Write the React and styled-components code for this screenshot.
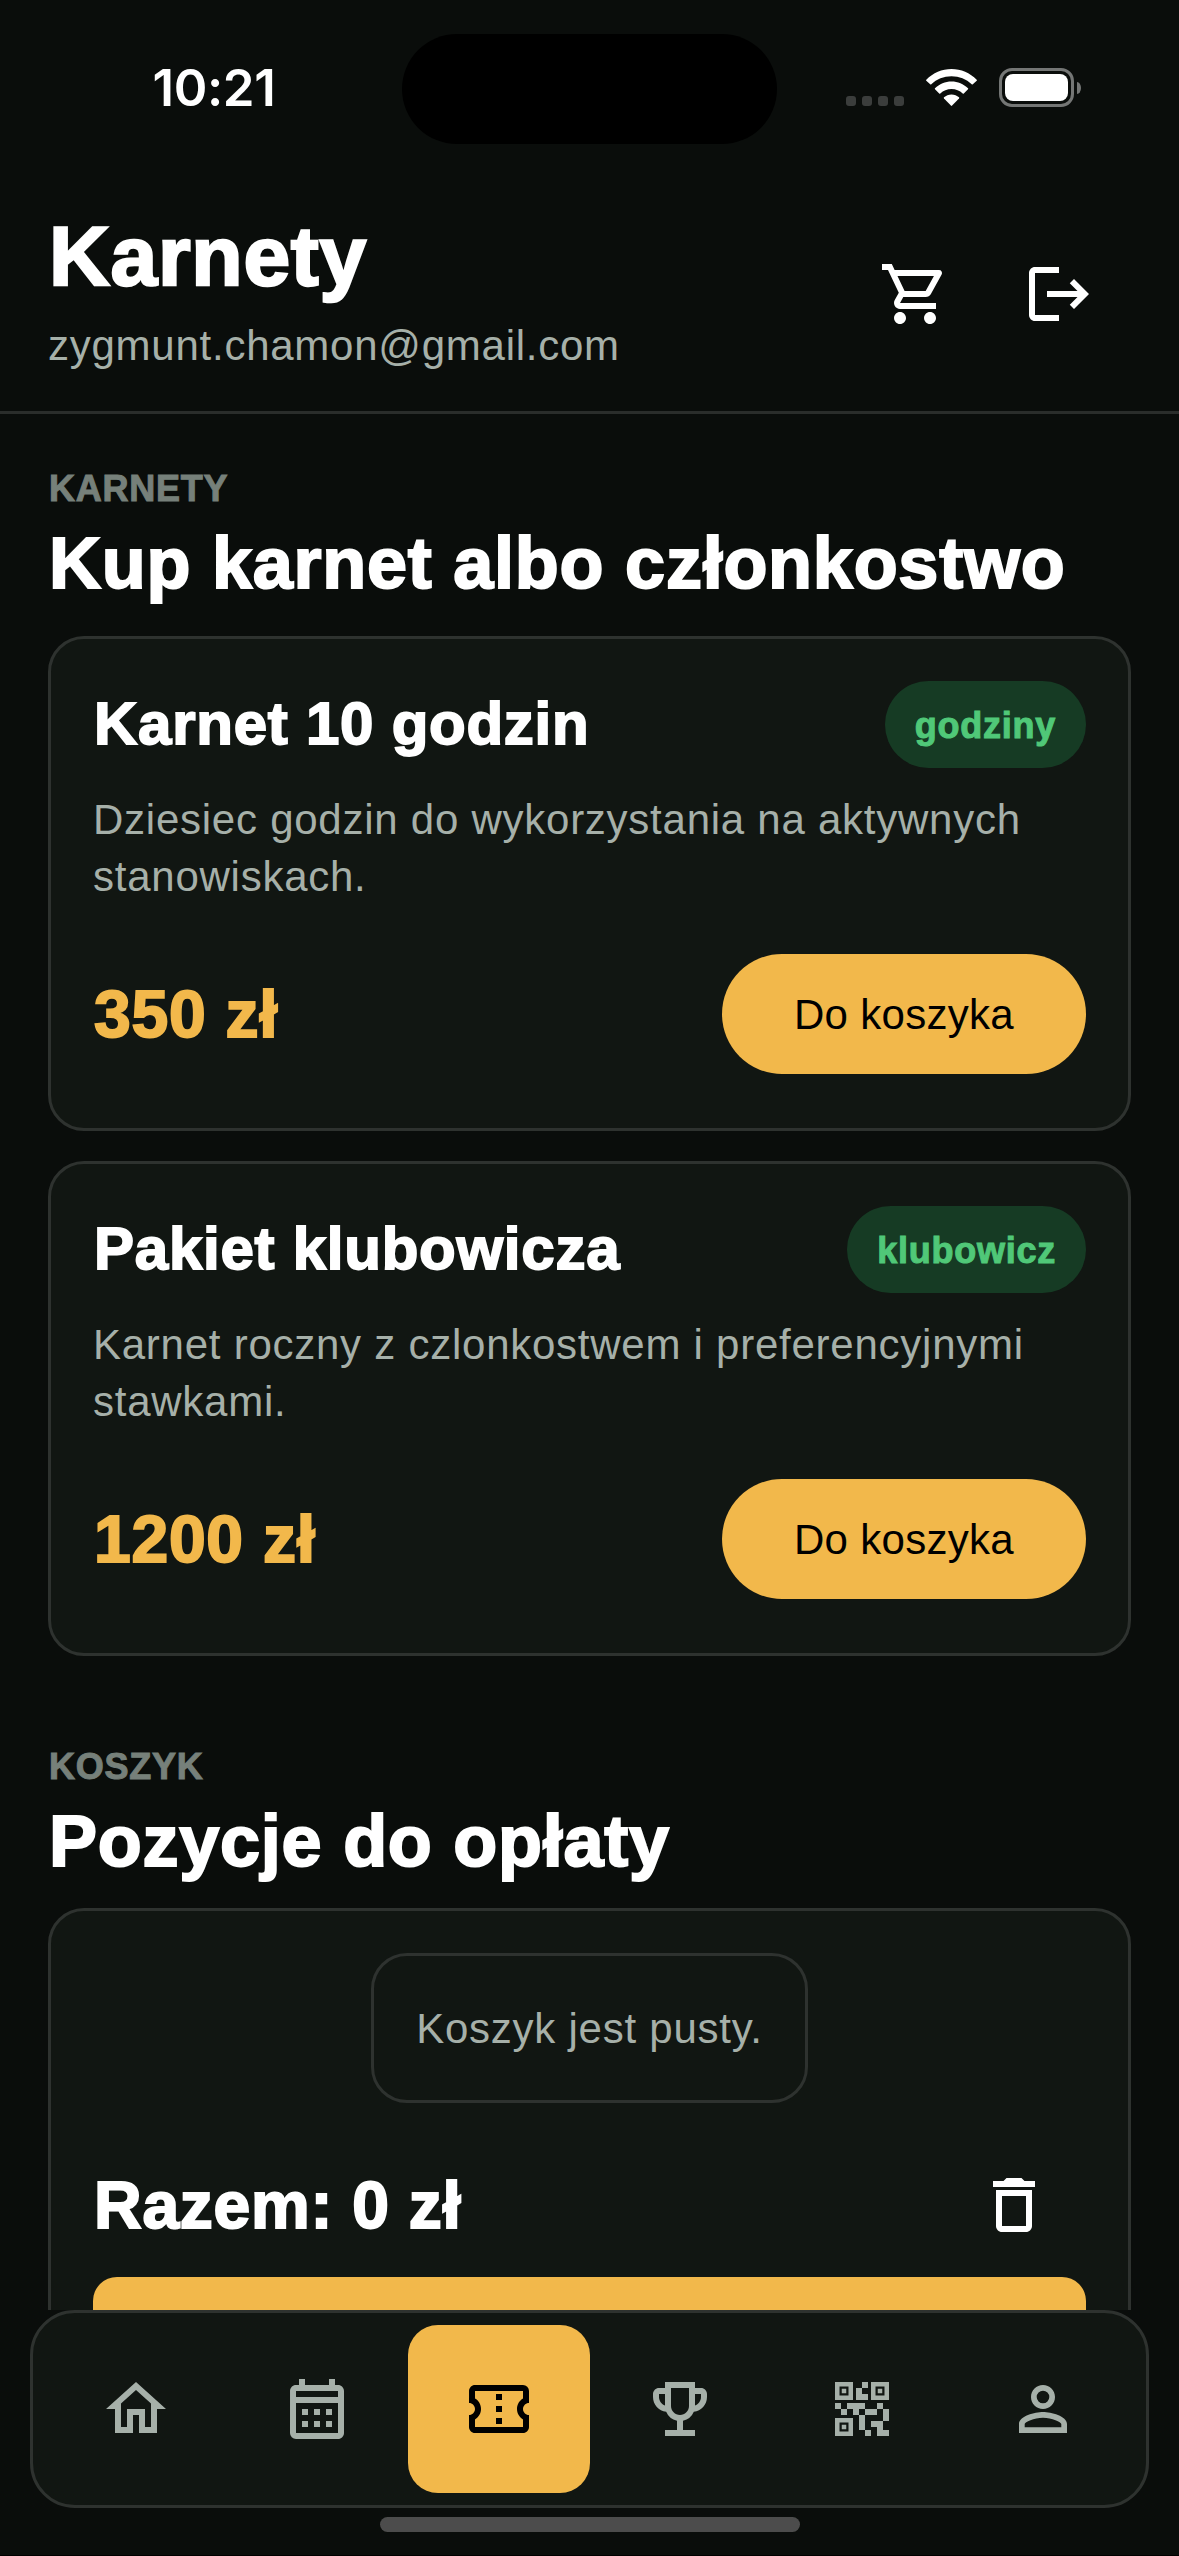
import React from 'react'
import styled, { createGlobalStyle } from 'styled-components'
import {
  MdDeleteOutline,
  MdLogout,
  MdOutlineCalendarMonth,
  MdOutlineConfirmationNumber,
  MdOutlineEmojiEvents,
  MdOutlineHome,
  MdOutlineShoppingCart,
  MdPersonOutline,
  MdQrCode2,
} from 'react-icons/md'

const colors = {
  background: '#0a0d0b',
  surface: '#111612',
  border: '#2e322f',
  text: '#ffffff',
  muted: '#a6b0a9',
  caption: '#76807a',
  amber: '#f2b84b',
  greenDark: '#163b24',
  green: '#50c878',
}

const GlobalStyle = createGlobalStyle`
  * {
    box-sizing: border-box;
  }

  body {
    margin: 0;
    background: ${colors.background};
    color: ${colors.text};
    font-family: "Liberation Sans", Arial, sans-serif;
    font-size: 42px;
    letter-spacing: 0.75px;
  }

  h1, h2, h3, p {
    margin: 0;
  }

  button {
    border: 0;
    padding: 0;
    font: inherit;
  }
`

const Screen = styled.div`
  display: flex;
  flex-direction: column;
  width: 1179px;
  height: 2556px;
  overflow: hidden;
  border-bottom: 1px solid #000;
`

// STATUS BAR
const StatusBar = styled.div`
  display: grid;
  grid-template-columns: 402px 375px 1fr;
  align-items: start;
  flex: none;
  height: 177px;
  padding-top: 34px;
`

const Time = styled.time`
  padding: 23px 0 0 26px;
  font-family: Inter, sans-serif;
  font-size: 51px;
  font-weight: 600;
  line-height: 62px;
  letter-spacing: -0.4px;
  text-align: center;
`

const Island = styled.div`
  height: 110px;
  border-radius: 55px;
  background: #000;
`

const StatusIcons = styled.div`
  display: flex;
  align-items: flex-end;
  height: 73px;
  padding-left: 69px;
`

const Signal = styled.div`
  display: flex;
  gap: 6px;
  margin: 0 22px 1px 0;
`

const SignalDot = styled.i`
  width: 10px;
  height: 10px;
  border-radius: 3px;
  background: #3b3d3c;
`

const WifiIcon = styled.svg`
  width: 51px;
  height: 38px;
  margin-right: 22px;
  fill: #fff;
`

const Battery = styled.div`
  width: 75px;
  height: 39px;
  padding: 3px;
  border: 3px solid #747675;
  border-radius: 13px;
`

const BatteryLevel = styled.div`
  height: 100%;
  border-radius: 8px;
  background: #fff;
`

const BatteryCap = styled.div`
  width: 4px;
  height: 12px;
  margin: 0 0 13px 3px;
  border-radius: 0 4px 4px 0 / 0 6px 6px 0;
  background: #747675;
`

// HEADER
const Header = styled.header`
  display: flex;
  align-items: center;
  justify-content: space-between;
  flex: none;
  height: 237px;
  padding: 0 48px;
  border-bottom: 3px solid #2a2d2b;
`

const HeaderText = styled.div`
  padding-top: 2px;
`

const Heading = styled.h1`
  margin-bottom: 18px;
  padding-left: 1px;
  font-size: 84px;
  line-height: 84px;
  -webkit-text-stroke: 2.4px currentColor;
`

const Email = styled.p`
  color: ${colors.muted};
  line-height: 60px;
`

const Actions = styled.div`
  display: flex;
`

const IconButton = styled.button`
  display: flex;
  align-items: center;
  justify-content: center;
  width: 144px;
  height: 144px;
  background: none;
  color: ${colors.text};
  font-size: 72px;
`

// CONTENT
const Content = styled.main`
  flex: 1;
  min-height: 0;
  overflow: hidden;
  padding: 49px 48px 0;
`

const Section = styled.section`
  margin-bottom: 85px;
`

const Caption = styled.p`
  padding-left: 1px;
  color: ${colors.caption};
  font-size: 36px;
  font-weight: 700;
  line-height: 51px;
  text-transform: uppercase;
  -webkit-text-stroke: 1px currentColor;
`

const SectionTitle = styled.h2`
  margin-bottom: ${({ $gap }) => $gap}px;
  padding-left: 1px;
  font-size: 72px;
  line-height: 99px;
  -webkit-text-stroke: 2px currentColor;
  white-space: nowrap;
`

const Card = styled.article`
  padding: 42px;
  border: 3px solid ${colors.border};
  border-radius: 36px;
  background: ${colors.surface};

  & + & {
    margin-top: 30px;
  }
`

const Row = styled.div`
  display: flex;
  align-items: center;
  justify-content: space-between;
`

const CardTitle = styled.h3`
  padding: 0 0 2px 1px;
  font-size: 60px;
  line-height: 85px;
  -webkit-text-stroke: 1.8px currentColor;
`

const Badge = styled.span`
  padding: 19px 30px 17px;
  border-radius: 44px;
  background: ${colors.greenDark};
  color: ${colors.green};
  font-size: 36px;
  font-weight: 700;
  line-height: 51px;
  -webkit-text-stroke: 1px currentColor;
`

const Description = styled.p`
  margin: 23px 0 37px;
  color: ${colors.muted};
  line-height: 57px;
`

const Amount = styled.strong`
  padding-left: 1px;
  color: ${({ $accent }) => ($accent ? colors.amber : colors.text)};
  font-size: 66px;
  line-height: 94px;
  -webkit-text-stroke: 2px currentColor;
`

const AddButton = styled.button`
  height: 120px;
  margin: 12px 0;
  padding: 2px 72px 0;
  border-radius: 60px;
  background: ${colors.amber};
  color: #000;
  letter-spacing: 0.3px;
`

const EmptyCart = styled.p`
  width: fit-content;
  margin: 0 auto 30px;
  padding: 43px 42px 41px;
  border: 3px solid ${colors.border};
  border-radius: 36px;
  color: ${colors.muted};
  line-height: 60px;
`

const CheckoutButton = styled.button`
  display: block;
  width: 100%;
  height: 144px;
  border-radius: 24px;
  background: ${colors.amber};
`

// BOTTOM NAVIGATION
const Nav = styled.nav`
  display: grid;
  grid-template-columns: repeat(6, 1fr);
  flex: none;
  height: 198px;
  margin: 0 30px;
  padding: 12px;
  border: 3px solid ${colors.border};
  border-radius: 45px;
  background: ${colors.surface};
`

const NavItem = styled.button`
  display: flex;
  align-items: center;
  justify-content: center;
  border-radius: 30px;
  background: ${({ $active }) => ($active ? colors.amber : 'none')};
  color: ${({ $active }) => ($active ? '#000' : colors.muted)};
  font-size: 72px;
`

const HomeIndicator = styled.div`
  flex: none;
  width: 420px;
  height: 15px;
  margin: 9px auto 23px;
  border-radius: 8px;
  background: #4c4c4c;
`

const passes = [
  {
    name: 'Karnet 10 godzin',
    type: 'godziny',
    description: 'Dziesiec godzin do wykorzystania na aktywnych stanowiskach.',
    price: 350,
  },
  {
    name: 'Pakiet klubowicza',
    type: 'klubowicz',
    description: 'Karnet roczny z czlonkostwem i preferencyjnymi stawkami.',
    price: 1200,
  },
]

const tabs = [
  { label: 'Start', Icon: MdOutlineHome },
  { label: 'Kalendarz', Icon: MdOutlineCalendarMonth },
  { label: 'Karnety', Icon: MdOutlineConfirmationNumber, active: true },
  { label: 'Zawody', Icon: MdOutlineEmojiEvents },
  { label: 'Kod QR', Icon: MdQrCode2 },
  { label: 'Profil', Icon: MdPersonOutline },
]

const PassCard = ({ name, type, description, price }) => (
  <Card>
    <Row>
      <CardTitle>{name}</CardTitle>
      <Badge>{type}</Badge>
    </Row>
    <Description>{description}</Description>
    <Row>
      <Amount $accent>{price} zł</Amount>
      <AddButton>Do koszyka</AddButton>
    </Row>
  </Card>
)

const App = () => (
  <Screen>
    <GlobalStyle />
    <StatusBar>
      <Time>10:21</Time>
      <Island />
      <StatusIcons>
        <Signal>
          <SignalDot />
          <SignalDot />
          <SignalDot />
          <SignalDot />
        </Signal>
        <WifiIcon viewBox="0 0 51 38">
          <path d="M.3 10.7C7 3.9 16 0 25.5 0S44 3.9 50.7 10.7q.5.5 0 1L46.8 15.2q-.6.5-1.1 0C40.3 10.1 33.2 7.2 25.5 7.2S10.7 10.1 5.3 15.2q-.5.5-1.1 0L.3 11.700q-.5-.5 0-1Z" />
          <path d="M9 19.3C13.4 15.1 19.2 12.6 25.5 12.6S37.6 15.1 42 19.3q.5.5 0 1L37.8 24.4q-.5.5-1.1 0C33.7 21.6 29.8 20 25.5 20s-8.200 1.600-11.200 4.400q-.6.5-1.1 0L9 20.300q-.5-.5 0-1Z" />
          <path d="M18 28.3C20 26.6 22.6 25.5 25.5 25.5s5.5 1.1 7.5 2.8q.5.5 0 1.1L26.1 36.6q-.6.6-1.2 0L18 29.400q-.5-.6 0-1.1Z" />
        </WifiIcon>
        <Battery>
          <BatteryLevel />
        </Battery>
        <BatteryCap />
      </StatusIcons>
    </StatusBar>

    <Header>
      <HeaderText>
        <Heading>Karnety</Heading>
        <Email>zygmunt.chamon@gmail.com</Email>
      </HeaderText>
      <Actions>
        <IconButton aria-label="Koszyk">
          <MdOutlineShoppingCart />
        </IconButton>
        <IconButton aria-label="Wyloguj">
          <MdLogout />
        </IconButton>
      </Actions>
    </Header>

    <Content>
      <Section>
        <Caption>Karnety</Caption>
        <SectionTitle $gap={23}>Kup karnet albo członkostwo</SectionTitle>
        {passes.map((pass) => (
          <PassCard key={pass.name} {...pass} />
        ))}
      </Section>
      <Section>
        <Caption>Koszyk</Caption>
        <SectionTitle $gap={17}>Pozycje do opłaty</SectionTitle>
        <Card>
          <EmptyCart>Koszyk jest pusty.</EmptyCart>
          <Row>
            <Amount>Razem: 0 zł</Amount>
            <IconButton aria-label="Wyczyść koszyk">
              <MdDeleteOutline />
            </IconButton>
          </Row>
          <CheckoutButton />
        </Card>
      </Section>
    </Content>

    <Nav>
      {tabs.map(({ label, Icon, active }) => (
        <NavItem key={label} aria-label={label} $active={active}>
          <Icon />
        </NavItem>
      ))}
    </Nav>
    <HomeIndicator />
  </Screen>
)

export default App
